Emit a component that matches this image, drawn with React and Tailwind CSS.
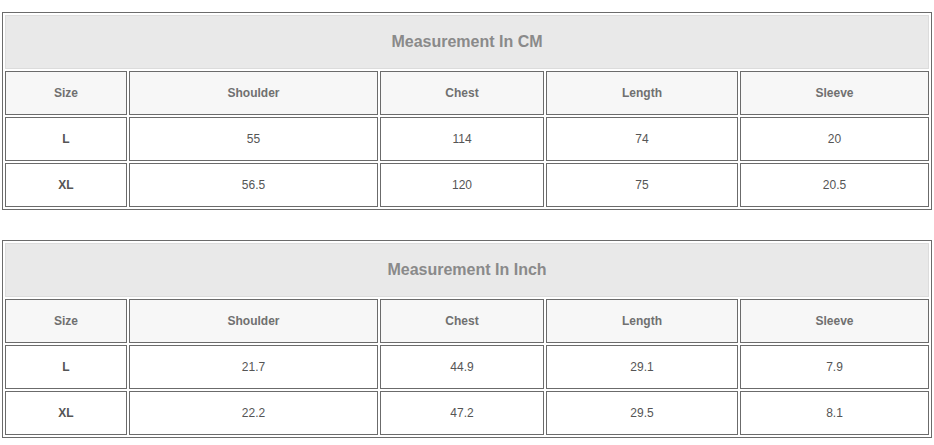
const cols = [
  { key: 'size', label: 'Size', w: 'w-[122px]' },
  { key: 'shoulder', label: 'Shoulder', w: 'w-[249px]' },
  { key: 'chest', label: 'Chest', w: 'w-[164px]' },
  { key: 'length', label: 'Length', w: 'w-[192px]' },
  { key: 'sleeve', label: 'Sleeve', w: 'w-[189px]' },
]

const tables = [
  {
    title: 'Measurement In CM',
    rows: [
      ['L', '55', '114', '74', '20'],
      ['XL', '56.5', '120', '75', '20.5'],
    ],
  },
  {
    title: 'Measurement In Inch',
    rows: [
      ['L', '21.7', '44.9', '29.1', '7.9'],
      ['XL', '22.2', '47.2', '29.5', '8.1'],
    ],
  },
]

function SizeTable({ title, rows }) {
  return (
    <div className="w-[930px] border border-[#6b6b6b] p-[2px] flex flex-col gap-[2px]">
      <div className="h-[54px] border border-[#dcdcdc] bg-[#e9e9e9] flex items-center justify-center text-[16px] font-bold text-[#8a8a8a]">
        {title}
      </div>
      <div className="flex gap-[2px]">
        {cols.map((c) => (
          <div
            key={c.key}
            className={`${c.w} h-[44px] border border-[#6b6b6b] bg-[#f7f7f7] flex items-center justify-center text-[12px] font-bold text-[#707070]`}
          >
            {c.label}
          </div>
        ))}
      </div>
      {rows.map((r) => (
        <div key={r[0]} className="flex gap-[2px]">
          {r.map((v, i) => (
            <div
              key={i}
              className={`${cols[i].w} h-[44px] border border-[#6b6b6b] bg-white flex items-center justify-center text-[12px] text-[#555] ${i === 0 ? 'font-bold' : ''}`}
            >
              {v}
            </div>
          ))}
        </div>
      ))}
    </div>
  )
}

export default function App() {
  return (
    <div className="w-[934px] h-[445px] bg-white pl-[2px] pt-[12px] flex flex-col gap-[30px] font-['Liberation_Sans',Arial,sans-serif]">
      {tables.map((t) => (
        <SizeTable key={t.title} title={t.title} rows={t.rows} />
      ))}
    </div>
  )
}
